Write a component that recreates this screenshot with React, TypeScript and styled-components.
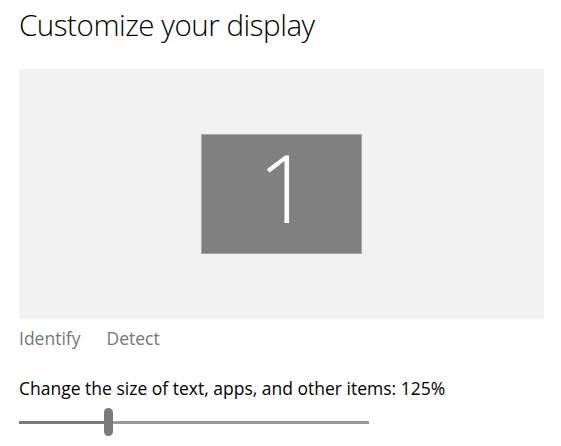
import React, { useState } from 'react'
import styled, { createGlobalStyle } from 'styled-components'

const GlobalStyle = createGlobalStyle`
	html, body {
		margin: 0;
		padding: 0;
		background: #ffffff;
		font-family: "Open Sans", "Noto Sans", "Liberation Sans", sans-serif;
	}
`

function App() {
	const [scale] = useState(125)
	const [sliderPos] = useState(89)

	return (
		<Page>
			<GlobalStyle />
			<Title>Customize your display</Title>
			<Preview>
				<Monitor>
					<MonitorNumber>1</MonitorNumber>
				</Monitor>
			</Preview>
			<Links>
				<LinkButton>Identify</LinkButton>
				<LinkButton>Detect</LinkButton>
			</Links>
			<Label>Change the size of text, apps, and other items: {scale}%</Label>
			<Slider>
				<Track>
					<Filled style={{ width: sliderPos }} />
				</Track>
				<Thumb style={{ left: sliderPos - 4 }} />
			</Slider>
		</Page>
	)
}

const Page = styled.main`
	display: flex;
	flex-direction: column;
	align-items: flex-start;
	width: 561px;
	height: 446px;
	padding: 5px 17px 0 19px;
	box-sizing: border-box;
	overflow: hidden;
`

const Title = styled.h1`
	margin: 0;
	font-size: 29.5px;
	font-weight: 300;
	color: #000;
	line-height: 40px;
	letter-spacing: -0.45px;
	white-space: nowrap;
`

const Preview = styled.div`
	display: flex;
	align-items: center;
	justify-content: center;
	margin-top: 24px;
	width: 525px;
	height: 250px;
	background: #f2f2f2;
`

const Monitor = styled.div`
	display: flex;
	align-items: flex-start;
	justify-content: center;
	width: 161px;
	height: 120px;
	padding-top: 5px;
	background: #808080;
	border: 1px solid #a8a8a8;
	box-sizing: border-box;
`

const MonitorNumber = styled.span`
	color: #fff;
	font-family: "Open Sans", "Noto Sans", sans-serif;
	font-weight: 300;
	font-size: 94px;
	line-height: 94px;
	margin-left: 6px;
`

const Links = styled.div`
	display: flex;
	gap: 26px;
	margin-top: 7px;
`

const LinkButton = styled.button`
	border: 0;
	background: none;
	padding: 0;
	font-family: inherit;
	font-size: 17.5px;
	color: #767676;
	line-height: 24px;
	cursor: pointer;
`

const Label = styled.div`
	margin-top: 26px;
	font-size: 17.5px;
	color: #000;
	line-height: 24px;
	white-space: nowrap;
`

const Slider = styled.div`
	position: relative;
	margin-top: 8px;
	width: 350px;
	height: 28px;
	display: flex;
	align-items: center;
`

const Track = styled.div`
	width: 100%;
	height: 3px;
	background: #999999;
	position: relative;
`

const Filled = styled.div`
	height: 100%;
	background: #7a7a7a;
`

const Thumb = styled.div`
	position: absolute;
	top: 0;
	width: 9px;
	height: 28px;
	border-radius: 5px;
	background: #7a7a7a;
`

export default App
